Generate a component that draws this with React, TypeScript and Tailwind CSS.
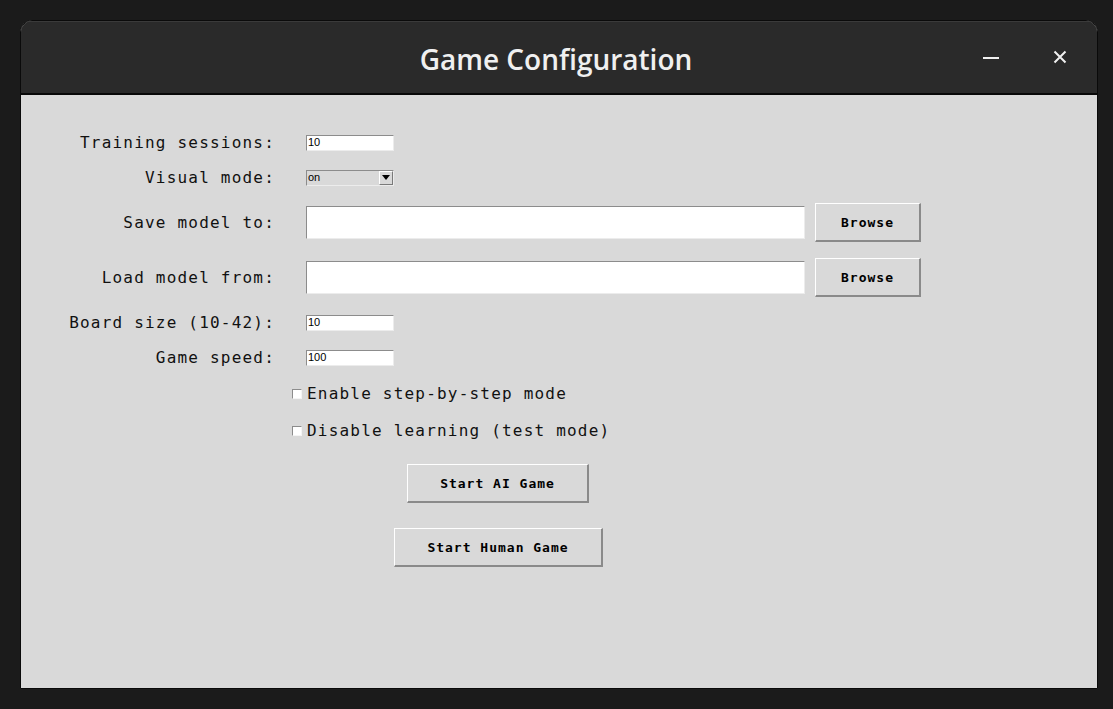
import React from "react";

const mono = { fontFamily: '"DejaVu Sans Mono", "Liberation Mono", monospace' };

function Label({ children }: { children: React.ReactNode }) {
  return (
    <div
      className="w-[254px] shrink-0 text-right text-[16px] tracking-[1.2px] text-[#111] leading-none"
      style={mono}
    >
      {children}
    </div>
  );
}

function SmallEntry({ value }: { value: string }) {
  return (
    <div className="ml-[31px] flex h-[16px] w-[88px] items-center border-t border-l border-t-[#8c8c8c] border-l-[#8c8c8c] border-b border-r border-b-[#ececec] border-r-[#ececec] bg-white pl-[1px] text-[11px] leading-none text-black [font-family:'Liberation_Sans',Arial,sans-serif]">
      {value}
    </div>
  );
}

function TkButton({ children, w }: { children: React.ReactNode; w: string }) {
  return (
    <div
      className={`flex h-[39px] ${w} items-center justify-center border-t border-l border-t-white border-l-white border-b-2 border-r-2 border-b-[#8a8a8a] border-r-[#8a8a8a] bg-[#d9d9d9] text-[13px] font-bold tracking-[1px] text-black leading-none`}
      style={mono}
    >
      {children}
    </div>
  );
}

function Check({ children }: { children: React.ReactNode }) {
  return (
    <div className="flex items-center pl-[271px]">
      <div className="h-[10px] w-[10px] border-t border-l border-t-[#8c8c8c] border-l-[#8c8c8c] border-b border-r border-b-[#f4f4f4] border-r-[#f4f4f4] bg-white" />
      <span
        className="ml-[5px] text-[16px] tracking-[1.2px] text-[#111] leading-none"
        style={mono}
      >
        {children}
      </span>
    </div>
  );
}

export default function App() {
  return (
    <div className="h-[709px] w-[1113px] overflow-hidden bg-[#1b1b1b] pl-[20px] pt-[20px]">
      <div className="flex h-[669px] w-[1078px] flex-col overflow-hidden rounded-t-[12px] border border-[#0a0a0a] bg-[#d9d9d9]">
        {/* Title bar */}
        <div className="relative flex h-[74px] shrink-0 items-center justify-center border-b-2 border-b-[#080808] bg-[#2a2a2a] pr-[6px] pt-[3px] shadow-[inset_0_1px_0_#3a3a3a]">
          <span
            className="text-[28px] font-semibold text-[#f0f0f0]"
            style={{ fontFamily: '"Open Sans", "Noto Sans", sans-serif' }}
          >
            Game Configuration
          </span>
          <div className="absolute right-[30px] top-[24px] flex items-center gap-[54px]">
            <div className="flex h-[24px] w-[17px] items-center justify-center">
              <div className="mt-[2px] h-[2px] w-[16px] bg-[#f0f0f0]" />
            </div>
            <svg width="14" height="14" viewBox="0 0 14 14">
              <path d="M1.5 1.5 L12.5 12.5 M12.5 1.5 L1.5 12.5" stroke="#f0f0f0" strokeWidth="2" />
            </svg>
          </div>
        </div>

        {/* Content */}
        <div className="flex flex-col pt-[30px]">
          <div className="flex h-[35px] items-center">
            <Label>Training sessions:</Label>
            <SmallEntry value="10" />
          </div>
          <div className="flex h-[35px] items-center">
            <Label>Visual mode:</Label>
            <div className="ml-[31px] flex h-[16px] w-[88px] items-center border-t border-l border-t-[#8c8c8c] border-l-[#8c8c8c] border-b border-r border-b-[#ececec] border-r-[#ececec] bg-[#d9d9d9]">
              <span className="flex-1 pl-[1px] text-[11px] leading-none text-black [font-family:'Liberation_Sans',Arial,sans-serif]">
                on
              </span>
              <div className="flex h-[14px] w-[14px] items-center justify-center border-t border-l border-t-white border-l-white border-b border-r border-b-[#7a7a7a] border-r-[#7a7a7a]">
                <svg width="8" height="5" viewBox="0 0 8 5">
                  <path d="M0 0 H8 L4 5 Z" fill="#000" />
                </svg>
              </div>
            </div>
          </div>

          <div className="mt-[8px] flex h-[39px] items-center">
            <Label>Save model to:</Label>
            <div className="ml-[31px] h-[33px] w-[499px] border-t border-l border-t-[#8c8c8c] border-l-[#8c8c8c] border-b border-r border-b-[#ececec] border-r-[#ececec] bg-white" />
            <div className="ml-[10px]">
              <TkButton w="w-[106px]">Browse</TkButton>
            </div>
          </div>
          <div className="mt-[16px] flex h-[39px] items-center">
            <Label>Load model from:</Label>
            <div className="ml-[31px] h-[33px] w-[499px] border-t border-l border-t-[#8c8c8c] border-l-[#8c8c8c] border-b border-r border-b-[#ececec] border-r-[#ececec] bg-white" />
            <div className="ml-[10px]">
              <TkButton w="w-[106px]">Browse</TkButton>
            </div>
          </div>

          <div className="mt-[8px] flex h-[35px] items-center">
            <Label>Board size (10-42):</Label>
            <SmallEntry value="10" />
          </div>
          <div className="flex h-[35px] items-center">
            <Label>Game speed:</Label>
            <SmallEntry value="100" />
          </div>

          <div className="mt-[1px] flex h-[35px] items-center">
            <Check>Enable step-by-step mode</Check>
          </div>
          <div className="mt-[2px] flex h-[36px] items-center">
            <Check>Disable learning (test mode)</Check>
          </div>

          <div className="mt-[15px] flex pl-[386px]">
            <TkButton w="w-[182px]">Start AI Game</TkButton>
          </div>
          <div className="mt-[25px] flex pl-[373px]">
            <TkButton w="w-[209px]">Start Human Game</TkButton>
          </div>
        </div>
      </div>
    </div>
  );
}
